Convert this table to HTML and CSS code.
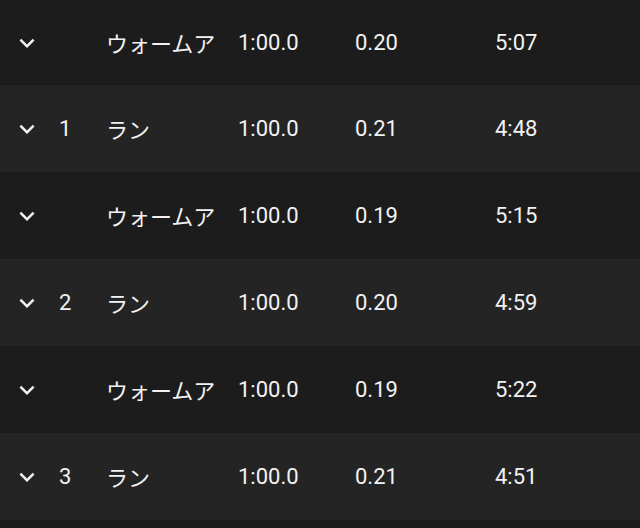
FILE: index.html
```html
<!DOCTYPE html>
<html lang="ja">
<head>
<meta charset="utf-8">
<link rel="stylesheet" href="styles.css">
</head>
<body>
<div class="list">
  <div class="row dark"><span class="icon"><svg viewBox="0 0 24 24"><path d="M16.59 8.59L12 13.17 7.41 8.59 6 10l6 6 6-6z"/></svg></span><span class="num"></span><span class="name">ウォームア</span><span class="time">1:00.0</span><span class="dist">0.20</span><span class="pace">5:07</span></div>
  <div class="row light"><span class="icon"><svg viewBox="0 0 24 24"><path d="M16.59 8.59L12 13.17 7.41 8.59 6 10l6 6 6-6z"/></svg></span><span class="num">1</span><span class="name">ラン</span><span class="time">1:00.0</span><span class="dist">0.21</span><span class="pace">4:48</span></div>
  <div class="row dark"><span class="icon"><svg viewBox="0 0 24 24"><path d="M16.59 8.59L12 13.17 7.41 8.59 6 10l6 6 6-6z"/></svg></span><span class="num"></span><span class="name">ウォームア</span><span class="time">1:00.0</span><span class="dist">0.19</span><span class="pace">5:15</span></div>
  <div class="row light"><span class="icon"><svg viewBox="0 0 24 24"><path d="M16.59 8.59L12 13.17 7.41 8.59 6 10l6 6 6-6z"/></svg></span><span class="num">2</span><span class="name">ラン</span><span class="time">1:00.0</span><span class="dist">0.20</span><span class="pace">4:59</span></div>
  <div class="row dark"><span class="icon"><svg viewBox="0 0 24 24"><path d="M16.59 8.59L12 13.17 7.41 8.59 6 10l6 6 6-6z"/></svg></span><span class="num"></span><span class="name">ウォームア</span><span class="time">1:00.0</span><span class="dist">0.19</span><span class="pace">5:22</span></div>
  <div class="row light"><span class="icon"><svg viewBox="0 0 24 24"><path d="M16.59 8.59L12 13.17 7.41 8.59 6 10l6 6 6-6z"/></svg></span><span class="num">3</span><span class="name">ラン</span><span class="time">1:00.0</span><span class="dist">0.21</span><span class="pace">4:51</span></div>
  <div class="row dark"></div>
</div>
</body>
</html>
```
FILE: styles.css
```css
html, body {
  margin: 0;
  padding: 0;
  background: #1c1c1c;
  overflow: hidden;
}
.list {
  display: flex;
  flex-direction: column;
  width: 640px;
  height: 528px;
  overflow: hidden;
  font-family: Roboto, "Noto Sans CJK JP", sans-serif;
  font-size: 22px;
  color: #f2f2f2;
}
.row {
  display: flex;
  align-items: center;
  height: 87px;
  flex: 0 0 87px;
  padding-left: 12px;
  box-sizing: border-box;
}
.row:first-child {
  height: 85px;
  flex-basis: 85px;
}
.dark { background: #1c1c1c; }
.light { background: #242424; }
.icon {
  width: 30px;
  height: 30px;
  display: flex;
}
.icon svg {
  width: 30px;
  height: 30px;
  fill: #f2f2f2;
}
.num {
  width: 47px;
  margin-left: 17px;
}
.name {
  width: 132px;
  white-space: nowrap;
  font-family: "Noto Sans CJK JP", sans-serif;
  line-height: 1.3;
}
.time { width: 117px; }
.dist { width: 140px; }
.pace { width: 100px; }
```
